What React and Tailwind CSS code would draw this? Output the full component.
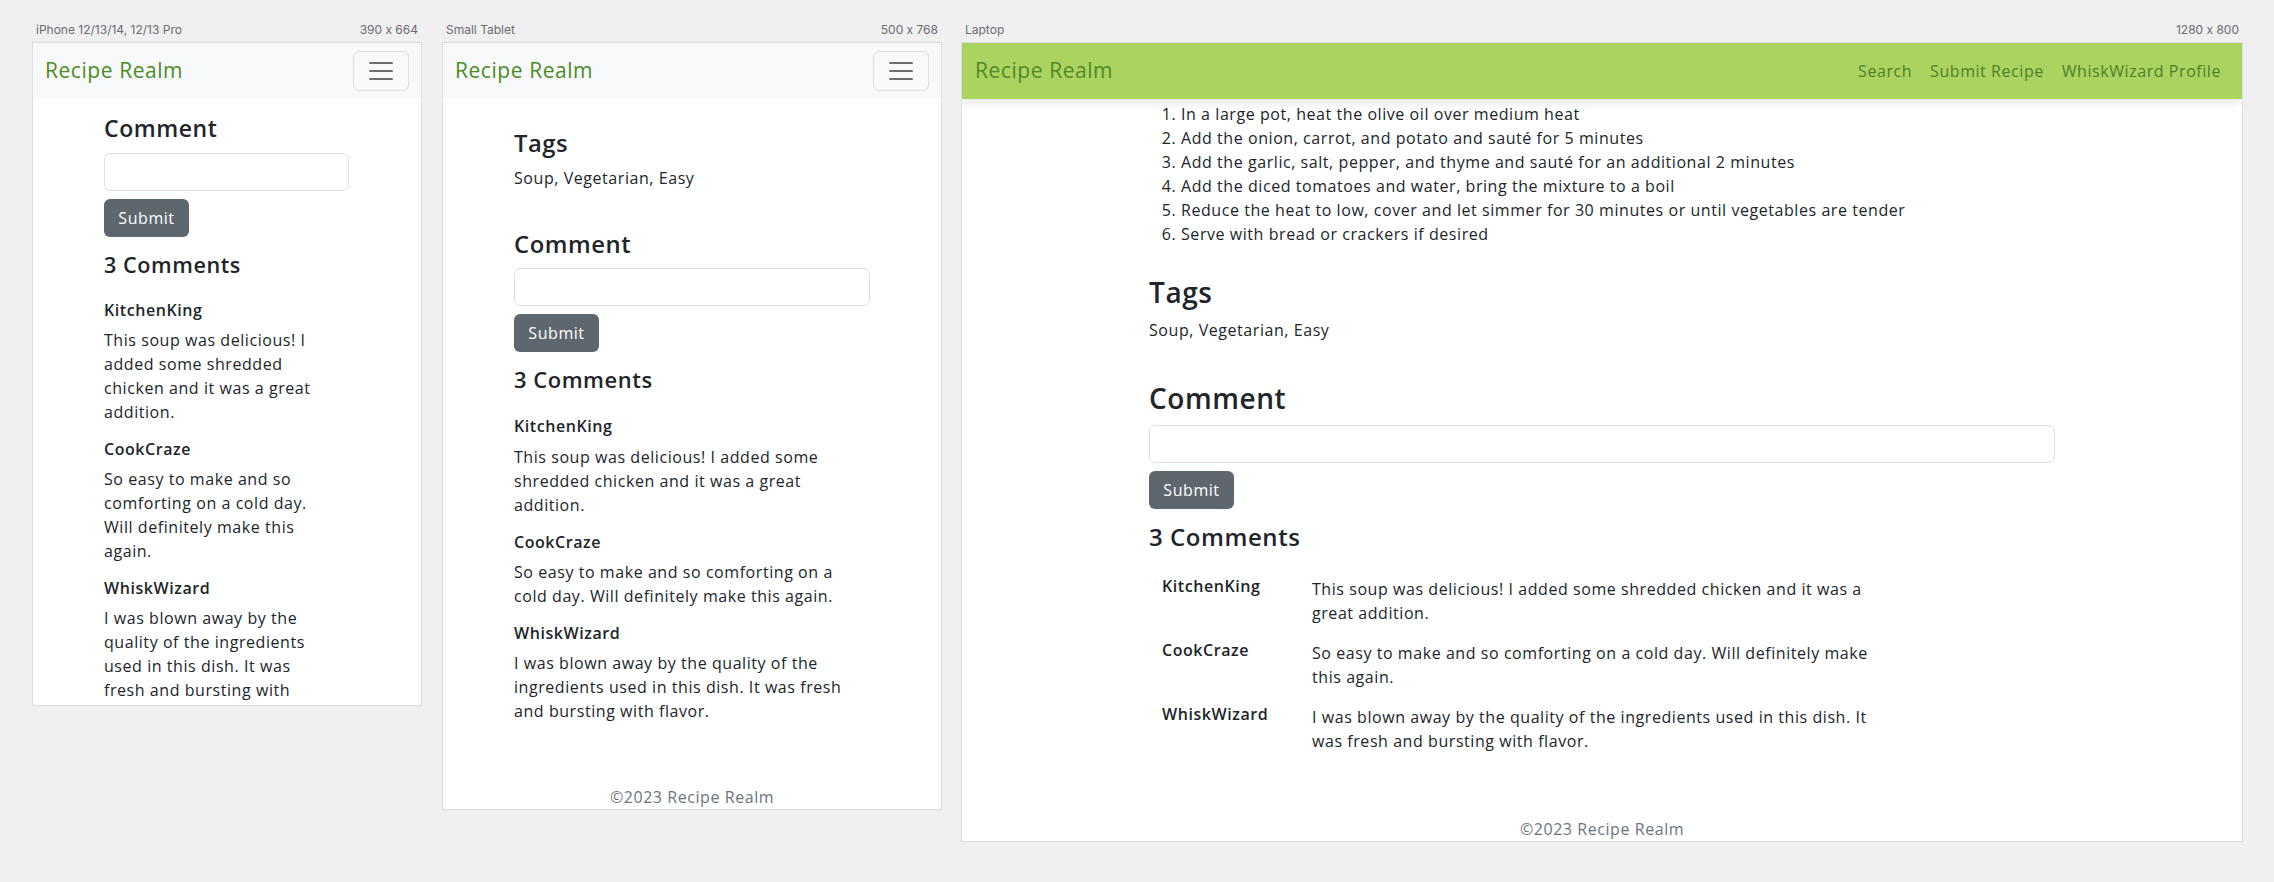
import React from "react";

const comments = [
  {
    name: "KitchenKing",
    text: "This soup was delicious! I added some shredded chicken and it was a great addition.",
  },
  {
    name: "CookCraze",
    text: "So easy to make and so comforting on a cold day. Will definitely make this again.",
  },
  {
    name: "WhiskWizard",
    text: "I was blown away by the quality of the ingredients used in this dish. It was fresh and bursting with flavor.",
  },
];

const steps = [
  "In a large pot, heat the olive oil over medium heat",
  "Add the onion, carrot, and potato and sauté for 5 minutes",
  "Add the garlic, salt, pepper, and thyme and sauté for an additional 2 minutes",
  "Add the diced tomatoes and water, bring the mixture to a boil",
  "Reduce the heat to low, cover and let simmer for 30 minutes or until vegetables are tender",
  "Serve with bread or crackers if desired",
];

function Frame({ label, size, className, children }) {
  return (
    <div className="flex flex-col shrink-0">
      <div className="flex justify-between px-[4px] h-[16px] leading-[16px] mb-[4px] text-[12px] tracking-normal text-[#6b6b70] font-['Inter',sans-serif] [font-feature-settings:'calt'_0]">
        <span>{label}</span>
        <span>{size}</span>
      </div>
      <div className={className}>{children}</div>
    </div>
  );
}

function MobileNav() {
  return (
    <div className="h-[56px] shrink-0 bg-[#f8f9fa] flex items-center justify-between px-3">
      <span className="text-[21px] text-[#4b8b1f]">Recipe Realm</span>
      <button className="w-[56px] h-[40px] flex items-center justify-center border border-[#dcdde0] rounded-md">
        <svg width="30" height="30" viewBox="0 0 30 30">
          <path d="M4 7h22M4 15h22M4 23h22" stroke="rgba(33,37,41,0.65)" strokeWidth="2" strokeLinecap="round" />
        </svg>
      </button>
    </div>
  );
}

function StackedComments({ textWidth }) {
  return (
    <div>
      {comments.map((c) => (
        <div key={c.name}>
          <h6 className="text-[16px] leading-[1.2] font-semibold mb-2">{c.name}</h6>
          <p className={`${textWidth} leading-6 mb-4`}>{c.text}</p>
        </div>
      ))}
    </div>
  );
}

function CommentForm({ headSize }) {
  return (
    <>
      <h3 className={`${headSize} leading-[1.2] font-semibold mb-[10px]`}>Comment</h3>
      <input type="text" className="block w-full h-[38px] border border-[#dee2e6] rounded-md" />
      <button className="mt-2 h-[38px] w-[85px] rounded-md bg-[#5f676e] text-white">Submit</button>
    </>
  );
}

function Footer() {
  return <div className="text-center text-[#6c757d] leading-6">©2023 Recipe Realm</div>;
}

export default function App() {
  return (
    <div className="min-h-screen w-full bg-[#f0f0f0] flex items-start pl-[32px] pt-[22px] text-[16px] text-[#212529] font-['Open_Sans',sans-serif] tracking-[0.035em]">
      {/* phone */}
      <Frame label="iPhone 12/13/14, 12/13 Pro" size="390 x 664" className="w-[390px] h-[664px] flex flex-col overflow-hidden border border-[#dcdde2] bg-white">
        <MobileNav />
        <div className="ml-[71px] w-[245px] pt-4">
          <CommentForm headSize="text-[23px]" />
          <h4 className="mt-[15px] mb-[23px] text-[21.6px] leading-[1.2] font-semibold">3 Comments</h4>
          <StackedComments textWidth="w-[222px]" />
        </div>
      </Frame>

      {/* small tablet */}
      <div className="ml-[20px]">
        <Frame label="Small Tablet" size="500 x 768" className="w-[500px] h-[768px] flex flex-col overflow-hidden border border-[#dcdde2] bg-white">
          <MobileNav />
          <div className="flex-1 ml-[71px] w-[356px] pt-[30px]">
            <h3 className="text-[23.8px] leading-[1.2] font-semibold mb-2">Tags</h3>
            <p className="leading-6">Soup, Vegetarian, Easy</p>
            <div className="mt-[40px]">
              <CommentForm headSize="text-[23.8px]" />
            </div>
            <h4 className="mt-[15px] mb-[24px] text-[21.9px] leading-[1.2] font-semibold">3 Comments</h4>
            <StackedComments textWidth="w-full" />
          </div>
          <Footer />
        </Frame>
      </div>

      {/* laptop */}
      <div className="ml-[19px]">
        <Frame label="Laptop" size="1280 x 800" className="w-[1282px] h-[800px] flex flex-col overflow-hidden border border-[#dcdde2] bg-white">
          <div className="relative z-10 h-[56px] shrink-0 bg-[#abd35f] flex items-center justify-between pl-[13px] pr-[12px] shadow-[0_4px_10px_rgba(0,0,0,0.1)]">
            <span className="text-[21px] text-[#4f8a2a]">Recipe Realm</span>
            <nav className="flex text-[#4e7f2c]">
              <a className="px-[9px]">Search</a>
              <a className="px-[9px]">Submit Recipe</a>
              <a className="px-[9px]">WhiskWizard Profile</a>
            </nav>
          </div>
          <div className="flex-1 ml-[187px] w-[906px] pt-[3px]">
            <ol className="list-decimal pl-[32px] leading-6">
              {steps.map((s) => (
                <li key={s}>{s}</li>
              ))}
            </ol>
            <h3 className="mt-[30px] text-[28px] leading-[1.2] font-semibold mb-2">Tags</h3>
            <p className="leading-6">Soup, Vegetarian, Easy</p>
            <div className="mt-[40px]">
              <CommentForm headSize="text-[28px]" />
            </div>
            <h4 className="mt-[14px] mb-[25px] text-[24px] leading-[1.2] font-semibold">3 Comments</h4>
            <div>
              {comments.map((c) => (
                <div key={c.name} className="flex items-start pl-[13px] mb-4">
                  <h6 className="w-[150px] shrink-0 text-[16px] leading-[1.2] font-semibold">{c.name}</h6>
                  <p className="w-[575px] leading-6">{c.text}</p>
                </div>
              ))}
            </div>
          </div>
          <Footer />
        </Frame>
      </div>
    </div>
  );
}
